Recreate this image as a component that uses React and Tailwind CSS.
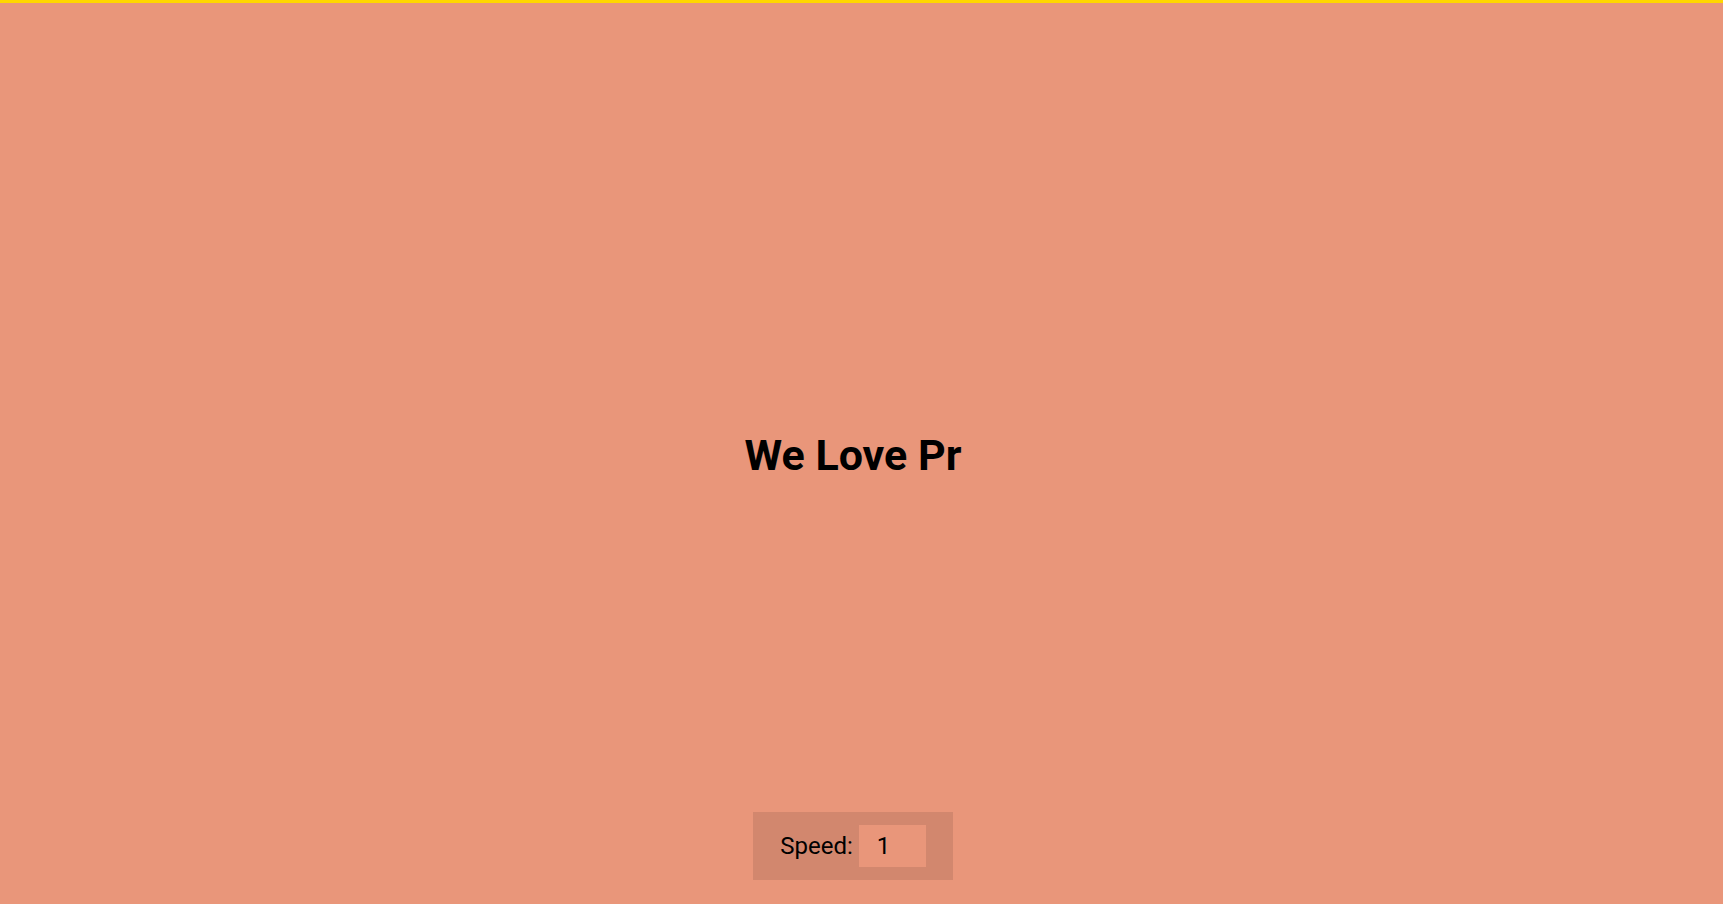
import { useState } from 'react';

const App = () => {
  const [speed, setSpeed] = useState('1');

  return (
    <div className="flex h-screen flex-col bg-[#e9967a] font-['Roboto',sans-serif] text-black">
      {/* Top accent bar */}
      <div className="h-[3px] w-full bg-[#ffd700]" />

      {/* Typed heading */}
      <main className="flex flex-1 items-center justify-center pr-[17px] pt-[96px]">
        <h1 className="text-[43px] font-bold leading-normal">We Love Pr</h1>
      </main>

      {/* Speed control */}
      <div className="flex justify-center pb-[24px] pr-[17px]">
        <div className="flex items-center bg-[#d2876e] px-[27px] py-[13px]">
          <label htmlFor="speed" className="mr-[6px] text-[24px] leading-none">
            Speed:
          </label>
          <input
            id="speed"
            value={speed}
            onChange={e => setSpeed(e.target.value)}
            className="h-[42px] w-[67px] bg-[#e9967a] pl-[18px] text-[24px] outline-none"
          />
        </div>
      </div>
    </div>
  );
};

export default App;
